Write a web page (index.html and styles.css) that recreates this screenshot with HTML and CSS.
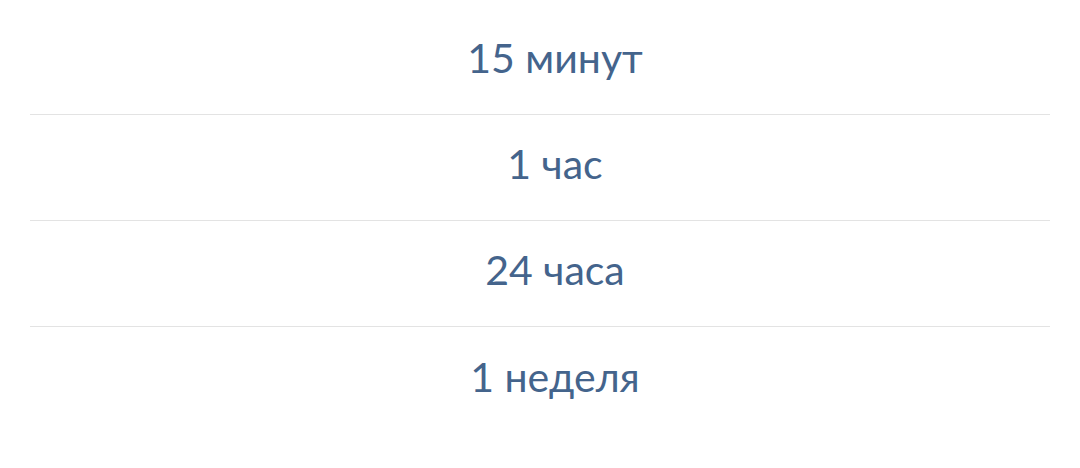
FILE: index.html
```html
<!DOCTYPE html>
<html lang="ru">
<head>
<meta charset="utf-8">
<link rel="stylesheet" href="styles.css">
</head>
<body>
<ul class="list">
  <li class="item">15 минут</li>
  <li class="item">1 час</li>
  <li class="item">24 часа</li>
  <li class="item">1 неделя</li>
</ul>
</body>
</html>
```
FILE: styles.css
```css
html, body {
  margin: 0;
  padding: 0;
  background: #ffffff;
}
.list {
  list-style: none;
  margin: 0;
  padding: 9px 30px 0;
}
.item {
  height: 106px;
  box-sizing: border-box;
  padding: 0 0 8px 30px;
  display: flex;
  align-items: center;
  justify-content: center;
  border-bottom: 1px solid #e3e3e3;
  font-family: Lato, "Noto Sans", sans-serif;
  font-size: 41px;
  color: #44648c;
}
.item:last-child {
  border-bottom: none;
}
```
